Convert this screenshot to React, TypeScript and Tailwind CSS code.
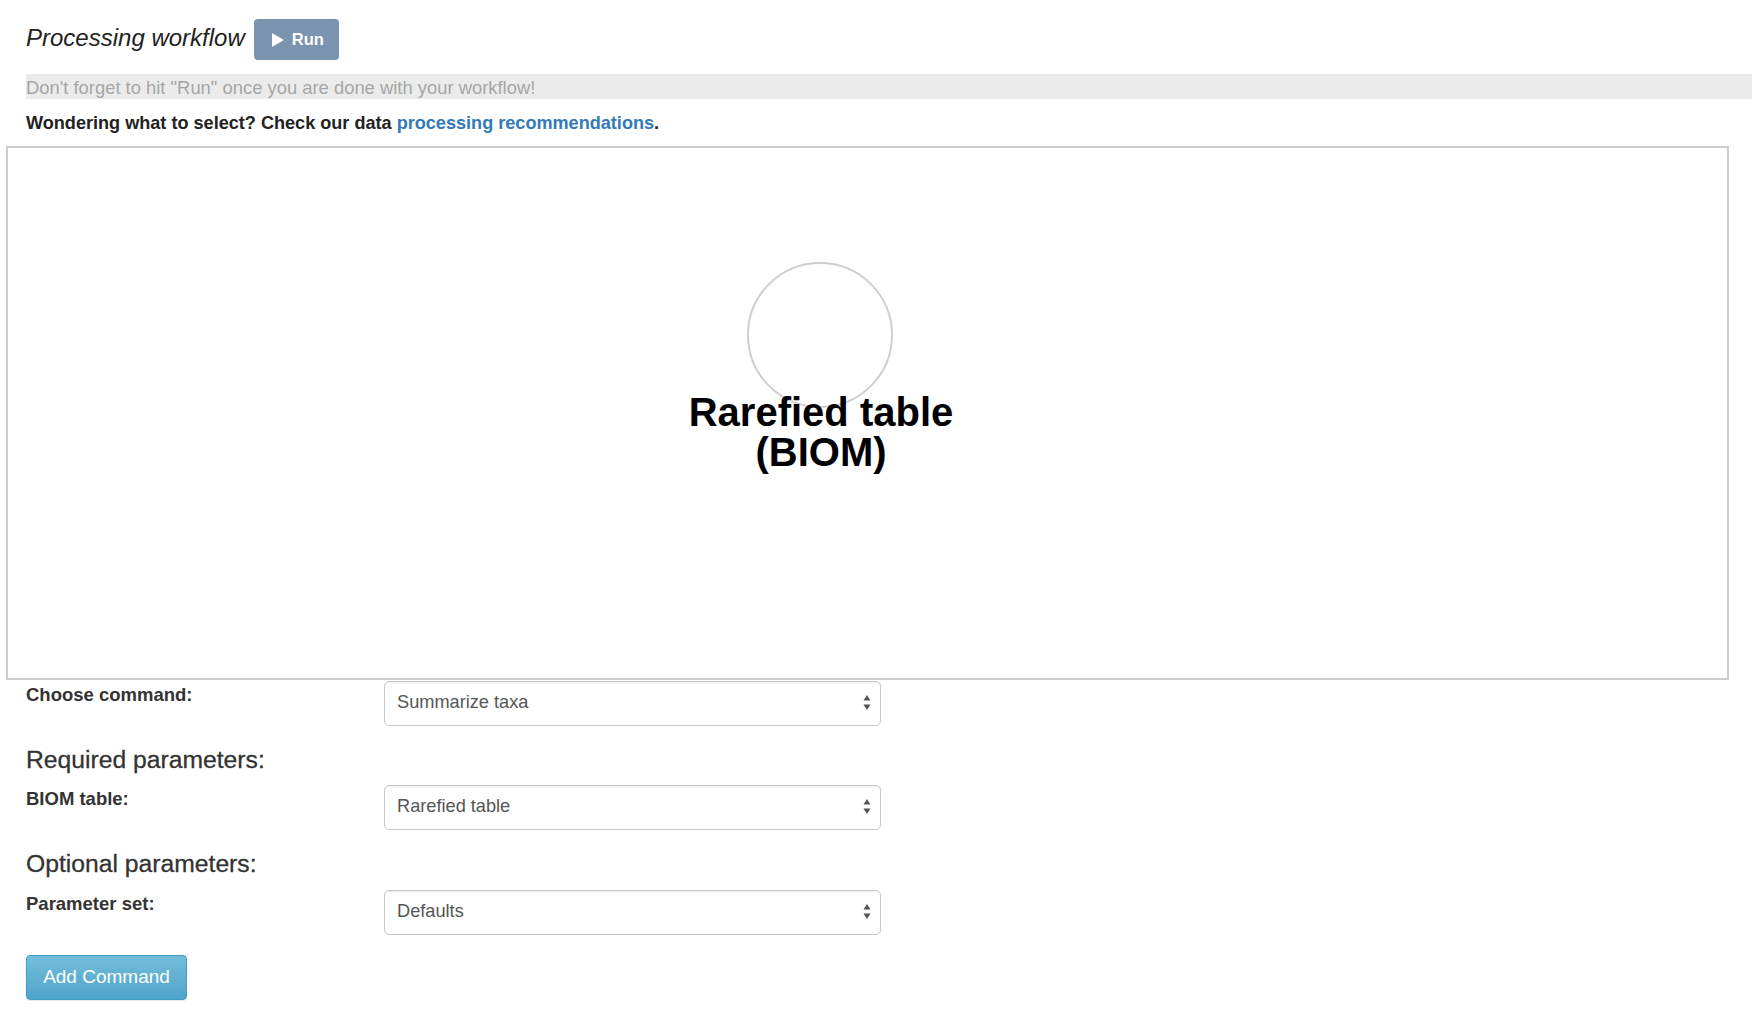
import React from "react";

function Arrows() {
  return (
    <svg width="8" height="16" viewBox="0 0 8 16" className="shrink-0">
      <path d="M4 0 L7.5 5.5 L0.5 5.5 Z" fill="#555" />
      <path d="M0.5 9.5 L7.5 9.5 L4 15 Z" fill="#555" />
    </svg>
  );
}

function Select({ value }: { value: string }) {
  return (
    <div className="flex h-[45px] w-[497px] items-center justify-between rounded-[5px] border border-[#c8c8c8] bg-white pb-[2px] pl-[12px] pr-[9px] text-[18.2px] text-[#555] shadow-[inset_0_1px_1px_rgba(0,0,0,0.075)]">
      <span>{value}</span>
      <Arrows />
    </div>
  );
}

function Row({ label, value }: { label: string; value: string }) {
  return (
    <div className="flex items-start">
      <label className="w-[358px] pt-[1px] text-[18.5px] font-bold leading-[25px] text-[#333]">{label}</label>
      <Select value={value} />
    </div>
  );
}

export default function App() {
  return (
    <div className="min-h-[1010px] w-full bg-white font-['Liberation_Sans',Arial,sans-serif] text-[#333]">
      <div className="flex items-center gap-[9px] pl-[26px] pt-[19px]">
        <h3 className="pb-[4px] text-[24px] italic leading-[30px] text-[#222]">Processing workflow</h3>
        <button className="flex h-[41px] items-center gap-[8px] rounded-[4px] bg-[#7a94b0] pl-[18px] pr-[15px] text-[16.5px] font-bold text-white">
          <svg width="12" height="14" viewBox="0 0 12 14">
            <path d="M0 0 L12 7 L0 14 Z" fill="white" />
          </svg>
          <span>Run</span>
        </button>
      </div>

      <div className="ml-[26px] mt-[14px] h-[25px] bg-[#ebebeb] pt-[1px] text-[18.4px] leading-[25px] text-[#a6a6a6]">
        Don't forget to hit "Run" once you are done with your workflow!
      </div>

      <p className="ml-[26px] mt-[12px] text-[18.1px] font-bold leading-[25px] text-[#222]">
        Wondering what to select? Check our data{" "}
        <a className="text-[#337ab7]" href="#">processing recommendations</a>.
      </p>

      <div className="relative ml-[6px] mr-[23px] mt-[10px] h-[534px] border-2 border-[#cccccc] bg-white">
        <svg width="150" height="150" viewBox="0 0 150 150" className="absolute left-[737px] top-[112px]">
          <circle cx="75" cy="75" r="72" fill="none" stroke="#cfcfcf" strokeWidth="2" />
        </svg>
        <div className="absolute left-[613px] top-[244px] w-[400px] text-center text-[40px] font-bold leading-[40px] text-black">
          Rarefied table
          <br />
          (BIOM)
        </div>
      </div>

      <div className="pl-[26px]">
        <div className="mt-[1px]">
          <Row label="Choose command:" value="Summarize taxa" />
        </div>
        <h3 className="mt-[19px] text-[24.7px] leading-[30px] text-[#333] [-webkit-text-stroke:0.3px_#333]">Required parameters:</h3>
        <div className="mt-[10px]">
          <Row label="BIOM table:" value="Rarefied table" />
        </div>
        <h3 className="mt-[19px] text-[24.7px] leading-[30px] text-[#333] [-webkit-text-stroke:0.3px_#333]">Optional parameters:</h3>
        <div className="mt-[11px]">
          <Row label="Parameter set:" value="Defaults" />
        </div>
        <button className="mt-[20px] h-[45px] w-[161px] rounded-[4px] border border-[#3f9cc5] bg-linear-to-b from-[#73bedc] to-[#4ea3c9] text-[19px] text-white shadow-[0_1px_1px_rgba(0,0,0,0.1)]">
          Add Command
        </button>
      </div>
    </div>
  );
}
